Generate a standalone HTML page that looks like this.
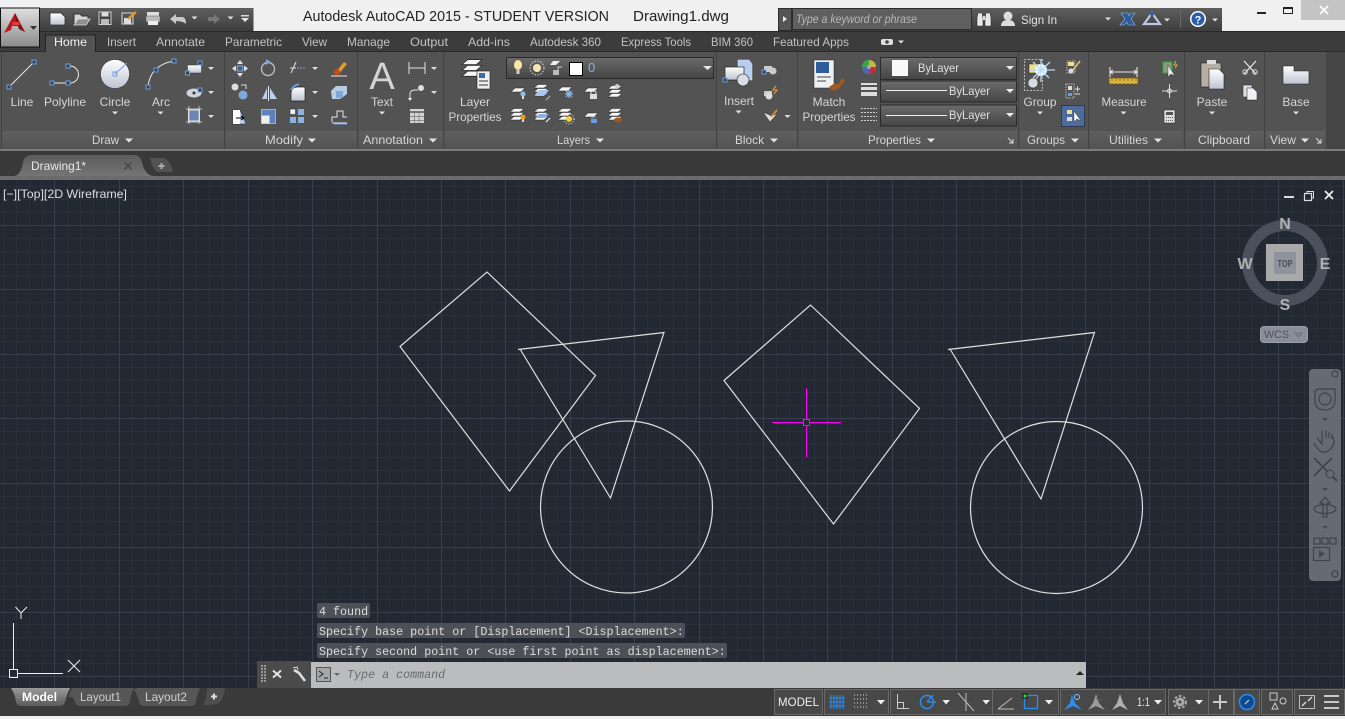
<!DOCTYPE html>
<html><head><meta charset="utf-8"><title>AutoCAD</title>
<style>
html,body{margin:0;padding:0;background:#f0f0f0;width:1345px;height:719px;overflow:hidden}
svg{display:block}
text{font-family:"Liberation Sans",sans-serif;font-size:12px;fill:#d6d6d6}
.c{text-anchor:middle}
.m{font-family:"Liberation Mono",monospace;font-size:11.7px;fill:#dcdcdc}
.tab{fill:#c2c2c2}
.nv{fill:none;stroke:#3f434b;stroke-width:1.2}
</style></head><body>
<svg width="1345" height="719" viewBox="0 0 1345 719" xmlns="http://www.w3.org/2000/svg">
<defs>
<linearGradient id="qat" x1="0" y1="0" x2="0" y2="1"><stop offset="0" stop-color="#5e5e5e"/><stop offset="1" stop-color="#3d3d3d"/></linearGradient>
<linearGradient id="app" x1="0" y1="0" x2="0" y2="1"><stop offset="0" stop-color="#e0e0e0"/><stop offset="1" stop-color="#8a8a8a"/></linearGradient>
<linearGradient id="dd" x1="0" y1="0" x2="0" y2="1"><stop offset="0" stop-color="#6b6b6b"/><stop offset="1" stop-color="#454545"/></linearGradient>
<linearGradient id="ft" x1="0" y1="0" x2="0" y2="1"><stop offset="0" stop-color="#5f5f5f"/><stop offset="1" stop-color="#535353"/></linearGradient>
<linearGradient id="wht" x1="0" y1="0" x2="0" y2="1"><stop offset="0" stop-color="#ffffff"/><stop offset="1" stop-color="#bfc3d2"/></linearGradient>
<linearGradient id="tabf" x1="0" y1="0" x2="0" y2="1"><stop offset="0" stop-color="#5c5c5c"/><stop offset="1" stop-color="#757575"/></linearGradient>
<linearGradient id="mod" x1="0" y1="0" x2="0" y2="1"><stop offset="0" stop-color="#9a9a9a"/><stop offset="1" stop-color="#5a5a5a"/></linearGradient>
<g id="t"><polygon points="-4,-2 4,-2 0,2" fill="#e4e4e4"/></g>
<g id="ts"><polygon points="-3,-1.500 3,-1.500 0,1.500" fill="#e0e0e0"/></g>
<g id="s"><rect x="-2" y="-2" width="4" height="4" fill="#3a3f48" stroke="#6a9fe8" stroke-width="1"/></g>
<g id="ly"><path d="M-7 2 L-3 -2 H7 L3 2 Z" fill="#f2f2f2" stroke="#222" stroke-width=".5"/></g>
<g id="st"><path d="M-7 -3 L-3 -6.500 H7 L3 -3 Z" fill="#f6f6f6" stroke="#222" stroke-width=".5"/><path d="M-7 1 L-3 -2.500 H7 L3 1 Z" fill="#f6f6f6" stroke="#222" stroke-width=".5"/><path d="M-7 5 L-3 1.500 H7 L3 5 Z" fill="#f6f6f6" stroke="#222" stroke-width=".5"/></g>
</defs>

<!-- title bar -->
<rect width="1345" height="719" fill="#f0f0f0"/>
<text x="303" y="21" textLength="306" lengthAdjust="spacingAndGlyphs" style="font-size:14.500px;fill:#222">Autodesk AutoCAD 2015 - STUDENT VERSION</text>
<text x="633" y="21" textLength="96" lengthAdjust="spacingAndGlyphs" style="font-size:14.500px;fill:#222">Drawing1.dwg</text>
<rect x="1301" y="0" width="44" height="20" fill="#c4c4c4"/>
<path d="M1320 6l8 8m0-8l-8 8" stroke="#fff" stroke-width="1.600" fill="none"/>
<rect x="1257" y="12" width="9" height="2" fill="#222"/>
<rect x="1283.500" y="7.500" width="9" height="6" fill="none" stroke="#222" stroke-width="1"/><rect x="1283" y="7" width="10" height="2" fill="#222"/>

<!-- QAT -->
<rect x="40" y="8" width="213.500" height="23.500" fill="url(#qat)"/>
<rect x="778" y="8" width="444" height="23.500" fill="url(#qat)"/>
<!-- tabs band -->
<rect x="0" y="31" width="1345" height="21" fill="#3c3c3c"/>
<rect x="0" y="31" width="1345" height="1" fill="#2a2a2a"/>
<rect x="0" y="52" width="1345" height="99" fill="#535353"/>
<rect x="1326" y="52" width="19" height="99" fill="#454545"/>
<rect x="0" y="51" width="1345" height="1" fill="#2a2a2a"/>
<rect x="45.500" y="35" width="50" height="18" fill="#535353"/><path d="M45.500 52V35H95.500V52" fill="none" stroke="#222"/>
<rect x="46" y="51" width="49" height="2" fill="#535353"/>

<!-- app button -->
<rect x=".5" y="8" width="39" height="39" fill="url(#app)" stroke="#111"/>
<path d="M4 33L15 13L25 32L19 29L20 26H12L11 30Z" fill="#b51a1e"/><path d="M15 13L20 24L25 32L19 29L15 18Z" fill="#7f1013"/><path d="M13 22H19L20 25H12Z" fill="#e63b3b"/>
<polygon points="30,26 37,26 33.500,30" fill="#333"/>

<!-- QAT icons -->
<path d="M50 13H61L65 17V25H50Z" fill="url(#wht)" stroke="#333" stroke-width=".8"/>
<path d="M74 14H80L82 16H88V25H74Z" fill="#d5d5d5" stroke="#333"/><path d="M74 25L78 19H90L86 25Z" fill="#8f8f8f" stroke="#ddd" stroke-width=".8"/>
<rect x="99" y="12" width="12" height="12.500" fill="#444" stroke="#d0d0d0"/><rect x="101.500" y="12.500" width="7" height="4" fill="#ddd"/><rect x="101" y="19" width="8" height="5" fill="#bbb"/>
<rect x="122" y="13" width="11" height="11" fill="#555" stroke="#ddd"/><rect x="124" y="18" width="7" height="6" fill="#ddd"/><path d="M128 19L136 12" stroke="#e59a2c" stroke-width="2.400"/>
<rect x="147" y="12" width="12" height="4" fill="#ddd"/><rect x="146" y="16" width="14" height="6" fill="#bbb" stroke="#555" stroke-width=".5"/><rect x="148" y="21" width="10" height="4" fill="#eee"/>
<path d="M170 19L176 14V17H182Q186 17 186 24Q183 21 176 21V24Z" fill="#c8c8c8"/>
<use href="#ts" x="194.500" y="18"/>
<path d="M220 19L214 14V17H208V21H214V24Z" fill="#777"/>
<use href="#ts" x="230.500" y="18"/>
<rect x="241" y="15" width="8" height="1.500" fill="#ddd"/><use href="#t" x="245" y="20"/>

<!-- search -->
<rect x="778.500" y="8.500" width="13" height="22" fill="#555" stroke="#2c2c2c"/>
<polygon points="783,16 783,22 787,19" fill="#e8e8e8"/>
<rect x="792.500" y="8.500" width="179" height="21" fill="#5f5f5f" stroke="#2c2c2c"/>
<text x="796" y="23" textLength="121" lengthAdjust="spacingAndGlyphs" style="font-size:11.500px;font-style:italic;fill:#b8b8b8">Type a keyword or phrase</text>
<path d="M977 26V18L978 13H982L983 18V26ZM985 26V18L986 13H990L991 18V26Z" fill="#e8e8e8" stroke="#333" stroke-width=".6"/><rect x="983" y="16" width="2" height="4" fill="#ddd"/>
<circle cx="1008" cy="16" r="4.500" fill="#ddd"/><path d="M1001 26Q1001 21 1006 20H1010Q1015 21 1015 26Z" fill="#ddd"/>
<text x="1021" y="24" textLength="36" lengthAdjust="spacingAndGlyphs" style="fill:#e2e2e2">Sign In</text>
<use href="#ts" x="1108" y="19"/>
<path d="M1121 13H1128L1129 16L1131 13H1135L1131 19L1135 25H1128L1127 22L1124 25H1120L1125 19Z" fill="#2d5c9e" stroke="#9ab8e0" stroke-width=".6"/>
<path d="M1152 13L1160 24H1144Z" fill="none" stroke="#b8c8ea" stroke-width="2.200"/><circle cx="1152" cy="14" r="2" fill="#345ea6"/>
<use href="#ts" x="1167" y="20"/>
<rect x="1180" y="10" width="1" height="18" fill="#6a6a6a"/>
<circle cx="1198" cy="19" r="8" fill="#fff"/><circle cx="1198" cy="19" r="6.500" fill="#2a5caa"/>
<text x="1198" y="23.500" class="c" style="font-weight:bold;font-size:11px;fill:#fff">?</text>
<use href="#ts" x="1215" y="20"/>

<!-- tab labels -->
<text x="54" y="46" textLength="33" lengthAdjust="spacingAndGlyphs" style="fill:#f0f0f0">Home</text>
<text class="tab" x="107" y="46" textLength="29" lengthAdjust="spacingAndGlyphs">Insert</text>
<text class="tab" x="156" y="46" textLength="49" lengthAdjust="spacingAndGlyphs">Annotate</text>
<text class="tab" x="225" y="46" textLength="57" lengthAdjust="spacingAndGlyphs">Parametric</text>
<text class="tab" x="302" y="46" textLength="25" lengthAdjust="spacingAndGlyphs">View</text>
<text class="tab" x="347" y="46" textLength="43" lengthAdjust="spacingAndGlyphs">Manage</text>
<text class="tab" x="410" y="46" textLength="38" lengthAdjust="spacingAndGlyphs">Output</text>
<text class="tab" x="468" y="46" textLength="42" lengthAdjust="spacingAndGlyphs">Add-ins</text>
<text class="tab" x="530" y="46" textLength="71" lengthAdjust="spacingAndGlyphs">Autodesk 360</text>
<text class="tab" x="621" y="46" textLength="70" lengthAdjust="spacingAndGlyphs">Express Tools</text>
<text class="tab" x="711" y="46" textLength="42" lengthAdjust="spacingAndGlyphs">BIM 360</text>
<text class="tab" x="773" y="46" textLength="76" lengthAdjust="spacingAndGlyphs">Featured Apps</text>
<rect x="881" y="39" width="12" height="6" rx="2" fill="#ddd"/><circle cx="887" cy="42" r="1.800" fill="#444"/>
<use href="#ts" x="901" y="42"/>

<!-- panel footers and dividers -->
<rect x="2" y="131" width="222" height="17" fill="url(#ft)"/><rect x="226" y="131" width="131" height="17" fill="url(#ft)"/><rect x="359" y="131" width="84" height="17" fill="url(#ft)"/><rect x="445" y="131" width="271" height="17" fill="url(#ft)"/><rect x="718" y="131" width="79" height="17" fill="url(#ft)"/><rect x="799" y="131" width="219" height="17" fill="url(#ft)"/><rect x="1020" y="131" width="68" height="17" fill="url(#ft)"/><rect x="1090" y="131" width="93" height="17" fill="url(#ft)"/><rect x="1186" y="131" width="78" height="17" fill="url(#ft)"/><rect x="1266" y="131" width="59" height="17" fill="url(#ft)"/>
<path d="M224.500 52V149M357.500 52V149M443.500 52V149M716.500 52V149M797.500 52V149M1018.500 52V149M1088.500 52V149M1184.500 52V149M1264.500 52V149M1.500 52V149" stroke="#424242" fill="none"/>
<rect x="0" y="149" width="1345" height="2" fill="#7b7b7b"/>

<!-- panel titles -->
<text x="92" y="144" textLength="27" lengthAdjust="spacingAndGlyphs">Draw</text><use href="#t" x="129" y="140.500"/>
<text x="265" y="144" textLength="38" lengthAdjust="spacingAndGlyphs">Modify</text><use href="#t" x="312" y="140.500"/>
<text x="363" y="144" textLength="60" lengthAdjust="spacingAndGlyphs">Annotation</text><use href="#t" x="433" y="140.500"/>
<text x="557" y="144" textLength="33" lengthAdjust="spacingAndGlyphs">Layers</text><use href="#t" x="600" y="140.500"/>
<text x="735" y="144" textLength="29" lengthAdjust="spacingAndGlyphs">Block</text><use href="#t" x="774" y="140.500"/>
<text x="868" y="144" textLength="53" lengthAdjust="spacingAndGlyphs">Properties</text><use href="#t" x="931" y="140.500"/>
<text x="1027" y="144" textLength="38" lengthAdjust="spacingAndGlyphs">Groups</text><use href="#t" x="1075" y="140.500"/>
<text x="1109" y="144" textLength="39" lengthAdjust="spacingAndGlyphs">Utilities</text><use href="#t" x="1158" y="140.500"/>
<text x="1198" y="144" textLength="52" lengthAdjust="spacingAndGlyphs">Clipboard</text>
<text x="1270" y="144" textLength="26" lengthAdjust="spacingAndGlyphs">View</text><use href="#t" x="1305" y="140.500"/>
<path d="M1008 138l5 5m0-4v4h-4" stroke="#ddd" fill="none"/><path d="M1316 138l5 5m0-4v4h-4" stroke="#ddd" fill="none"/>

<!-- Draw -->
<path d="M9 87L34 62" stroke="#e8e8e8" stroke-width="1"/><use href="#s" x="9" y="87"/><use href="#s" x="34" y="62"/>
<path d="M52 83H70A8.500 8.500 0 0 0 70 66H68" stroke="#e8e8e8" fill="none"/><use href="#s" x="52" y="83"/><use href="#s" x="68" y="83"/><use href="#s" x="68" y="66"/>
<circle cx="115" cy="74" r="14.500" fill="url(#wht)" stroke="#333" stroke-width=".5"/><path d="M115 74L127 63" stroke="#6a9fe8"/><rect x="113" y="72" width="4" height="4" fill="none" stroke="#6a9fe8"/>
<path d="M148 87Q150 65 174 61" stroke="#e8e8e8" fill="none"/><use href="#s" x="148" y="87"/><use href="#s" x="156" y="70"/><use href="#s" x="174" y="61"/>
<text class="c" x="22" y="106">Line</text><text class="c" x="65" y="106" textLength="42" lengthAdjust="spacingAndGlyphs">Polyline</text><text class="c" x="115" y="106">Circle</text><text class="c" x="161" y="106">Arc</text>
<use href="#ts" x="115" y="113"/><use href="#ts" x="160.500" y="113"/>
<rect x="187.500" y="65" width="14" height="8" fill="url(#wht)" stroke="#333" stroke-width=".5"/><use href="#s" x="187.500" y="73"/><use href="#s" x="200" y="63"/>
<ellipse cx="194" cy="93" rx="7.500" ry="4.500" fill="#cfd3de"/><circle cx="194" cy="93" r="1.500" fill="#333"/><use href="#s" x="200" y="90"/>
<rect x="188.500" y="110" width="11" height="11" fill="#6c86b4" stroke="#ddd"/><path d="M186 109H202M186 122H202M189 106V124M199 106V124" stroke="#e8e8e8" stroke-width=".7"/>
<use href="#ts" x="211" y="68.500"/><use href="#ts" x="211" y="92.500"/><use href="#ts" x="211" y="116.500"/>

<!-- Modify -->
<path d="M240 60L243 64H237ZM240 77L243 73H237ZM232 68.500L236 65.500V71.500ZM248 68.500L244 65.500V71.500Z" fill="#e4e4e4"/><rect x="237.500" y="66" width="5" height="5" fill="none" stroke="#6a9fe8" stroke-width="1.200"/>
<circle cx="268" cy="69" r="6.500" fill="none" stroke="#bcbcbc" stroke-width="1.400"/><path d="M266 59L271 62L266 65Z" fill="#7da8de"/>
<path d="M291 73L296 62" stroke="#e0e0e0"/><path d="M290 68H296" stroke="#e0e0e0"/><path d="M297 68H306" stroke="#6a9fe8" stroke-dasharray="2 1"/>
<path d="M335 73L344 62 347 64 338 75Z" fill="#e49a32"/><circle cx="337" cy="72" r="3" fill="#cc4a14"/><path d="M331 76H347" stroke="#e8e8e8"/>
<use href="#ts" x="315" y="68.500"/><use href="#ts" x="315" y="92.500"/><use href="#ts" x="315" y="116.500"/>
<circle cx="235" cy="87" r="3.500" fill="#ddd"/><circle cx="243" cy="95" r="4.500" fill="#7da8de"/><path d="M241 85H246V89" stroke="#ddd" fill="none"/>
<path d="M267 88L262 99H267ZM270 88L277 99H270Z" fill="#b9d0ee"/><path d="M268.500 86V101" stroke="#eee"/>
<path d="M291 101V94Q291 87 298 87H305V101Z" fill="url(#wht)" stroke="#222" stroke-width=".7"/><path d="M291 90Q293 86 299 84" stroke="#6a9fe8" stroke-width="1.800" fill="none"/>
<path d="M331 91L336 86H347V94L340 99H332Z" fill="#b9cce4"/><rect x="336" y="91" width="7" height="7" fill="#7da8de"/>
<path d="M233 110H240L246 124H233Z" fill="#b8cfee" stroke="#222" stroke-width=".5"/><path d="M233 110H240V124H233Z" fill="#fff"/><path d="M236 118H244M241 116L244 118L241 120" stroke="#000" fill="none"/>
<rect x="261.500" y="109.500" width="14" height="14" fill="#5d82bb" stroke="#aac"/><rect x="261.500" y="115.500" width="8" height="8" fill="#eee"/>
<rect x="290" y="109" width="5.500" height="5.500" fill="#eee" stroke="#222" stroke-width=".5"/><rect x="298" y="109" width="6" height="6" fill="#8fb1e0"/><rect x="290" y="117" width="6" height="6" fill="#8fb1e0"/><rect x="298" y="117" width="6" height="6" fill="#8fb1e0"/>
<path d="M332 122V117H337V111H343V117H347M332 123H347" stroke="#dfe6f2" fill="none"/><path d="M334 124H347" stroke="#6a9fe8"/>

<!-- Annotation -->
<text x="382" y="89" class="c" style="font-size:38px;fill:#d4d4d4">A</text>
<text class="c" x="382" y="106">Text</text><use href="#ts" x="382" y="113"/>
<path d="M409 62V74M425 62V74M409 68H425" stroke="#e2e2e2" fill="none"/>
<path d="M410 100V94Q410 90 415 90H418" stroke="#e2e2e2" fill="none"/><circle cx="421" cy="88" r="3" fill="#ddd"/><path d="M408 98L410 101L412 98Z" fill="#eee"/>
<rect x="410" y="109" width="14" height="14" fill="#d4d4d4"/><path d="M410 112H424" stroke="#777" stroke-width="2"/><path d="M410 116.500H424M410 120.500H424M414.500 112V123M419 112V123" stroke="#777" stroke-width=".7"/>
<use href="#ts" x="434" y="68.500"/><use href="#ts" x="434" y="92.500"/>

<!-- Layers -->
<use href="#st" transform="translate(472,69) scale(1.450)"/><rect x="477" y="71" width="13" height="18" fill="#eee" stroke="#222" stroke-width=".6"/><rect x="479" y="73" width="6" height="5" fill="#3c6cae"/><path d="M479 81H488M479 85H488" stroke="#333"/>
<text class="c" x="475" y="106">Layer</text><text class="c" x="475" y="121" textLength="53" lengthAdjust="spacingAndGlyphs">Properties</text>
<rect x="506.500" y="57.500" width="207" height="21" fill="url(#dd)" stroke="#2a2a2a"/>
<ellipse cx="518" cy="65" rx="4" ry="5" fill="#f6e6a2"/><rect x="516.500" y="70" width="3" height="4" fill="#ccc"/>
<circle cx="537" cy="68" r="4" fill="#f6e6b0"/><circle cx="537" cy="68" r="7" fill="none" stroke="#ddd" stroke-dasharray="1.500 1.500"/>
<path d="M550 65L553 61H560L556 65Z" fill="#eee"/><rect x="553" y="70" width="6" height="5" fill="#bbb"/><path d="M558 70V67H562" stroke="#ccc" fill="none"/>
<rect x="569.500" y="62.500" width="13" height="13" fill="#fff" stroke="#000"/>
<text x="588" y="72" style="font-size:13px;fill:#86b2ea">0</text>
<polygon points="703,66 712,66 707.500,70" fill="#e8e8e8"/>
<use href="#ly" x="518" y="90"/><circle cx="523" cy="94" r="2.500" fill="#8ec0f0"/><rect x="522" y="96" width="2" height="3" fill="#ddd"/>
<use href="#st" x="541" y="91"/><path d="M535 95L539 90H549L545 95Z" fill="#a8c6ee"/><path d="M550 96L546 100" stroke="#bbb"/>
<use href="#ly" x="565" y="89"/><path d="M569 90V98M565 94H573M566 91L572 97M572 91L566 97" stroke="#8ebcf0" stroke-width="1.200"/>
<use href="#ly" x="591" y="90"/><rect x="590" y="94" width="7" height="5" fill="#ddd"/><path d="M591 94V92Q593.500 90 596 92V94" stroke="#ddd" fill="none"/>
<use href="#st" x="615" y="92"/><circle cx="617" cy="86" r="2" fill="#ccc"/>
<use href="#st" x="517" y="115"/><circle cx="523" cy="117" r="2.500" fill="#f09a22"/><rect x="522" y="119" width="2" height="3" fill="#ddd"/>
<use href="#st" x="541" y="115"/><path d="M535 118L539 114H549L545 118Z" fill="#8ab0e6"/><path d="M546 122L550 118" stroke="#fff"/>
<use href="#st" x="565" y="115"/><circle cx="569" cy="119" r="3" fill="#f6d03a"/><circle cx="569" cy="119" r="5" fill="none" stroke="#eee" stroke-dasharray="1 1.500"/>
<use href="#ly" x="591" y="115"/><rect x="591" y="119" width="6" height="4" fill="#6a9fe8"/><path d="M592 119V117H596" stroke="#6a9fe8" fill="none"/>
<use href="#st" x="615" y="115"/><ellipse cx="618" cy="120" rx="4" ry="2.500" fill="#9a5a1e"/>

<!-- Block -->
<path d="M738 60H749L752 64V80H738Z" fill="#b5cdee" stroke="#dde" stroke-width=".5"/><rect x="725" y="67" width="19" height="13" fill="url(#wht)" stroke="#222" stroke-width=".7"/><circle cx="743" cy="80" r="6" fill="#d9dce4" stroke="#222" stroke-width=".6"/><use href="#s" x="725" y="80"/>
<text class="c" x="739" y="105">Insert</text><use href="#ts" x="738.500" y="112"/>
<rect x="764" y="66" width="8" height="6" fill="#ccc"/><circle cx="773" cy="71" r="3.500" fill="#ccc"/><use href="#s" x="764" y="72"/>
<rect x="764" y="91" width="8" height="5" fill="#ccc"/><circle cx="769" cy="96" r="3.500" fill="#ddd"/><path d="M776 86L773 90H777L774 94" stroke="#f0a83a" fill="none"/>
<path d="M763 112L770 122L778 113L772 116Z" fill="#ddd" stroke="#222" stroke-width=".5"/><path d="M771 117L777 110" stroke="#e49a32" stroke-width="1.500"/>
<use href="#ts" x="787.500" y="116.500"/>

<!-- Properties -->
<rect x="814" y="60" width="20" height="28" fill="#eef0f4" stroke="#222" stroke-width=".5"/><rect x="816" y="62" width="13" height="11" fill="#2f5d9c"/><path d="M817 77H831M817 81H826" stroke="#444"/>
<path d="M829 87L835 83 838 85 842 78 845 80 841 86 838 89 832 91Z" fill="#9e5c20"/>
<text class="c" x="829" y="106">Match</text><text class="c" x="829" y="121" textLength="53" lengthAdjust="spacingAndGlyphs">Properties</text>
<circle cx="869" cy="67" r="7" fill="#c9b838"/><path d="M869 67L862 67A7 7 0 0 1 869 60Z" fill="#3ca24a"/><path d="M869 67L869 74A7 7 0 0 1 862 67Z" fill="#4a64c4"/><path d="M869 67L876 67A7 7 0 0 1 869 74Z" fill="#c42c3c"/><circle cx="869" cy="67" r="2" fill="#aaa"/>
<rect x="861" y="83" width="16" height="2" fill="#ddd"/><rect x="861" y="87" width="16" height="3" fill="#ddd"/><rect x="861" y="92" width="16" height="4" fill="#ddd"/>
<path d="M861 108.500H877M861 112.500H877M861 116.500H877M861 120.500H877" stroke="#ccc" stroke-dasharray="2 1"/>
<rect x="880.500" y="57.500" width="136" height="22" fill="url(#dd)" stroke="#2a2a2a"/>
<rect x="880.500" y="81" width="136" height="21" fill="url(#dd)" stroke="#2a2a2a"/>
<rect x="880.500" y="105" width="136" height="21" fill="url(#dd)" stroke="#2a2a2a"/>
<rect x="892" y="60" width="16" height="16" fill="#f8f8f8"/>
<text x="918" y="72" textLength="41" lengthAdjust="spacingAndGlyphs" style="fill:#e0e0e0">ByLayer</text>
<rect x="886" y="90" width="61" height="1" fill="#eee"/><rect x="886" y="115" width="61" height="1" fill="#eee"/>
<text x="949" y="95" textLength="41" lengthAdjust="spacingAndGlyphs" style="fill:#e0e0e0">ByLayer</text>
<text x="949" y="119" textLength="41" lengthAdjust="spacingAndGlyphs" style="fill:#e0e0e0">ByLayer</text>
<polygon points="1006,66 1014,66 1010,70" fill="#eee"/><polygon points="1006,89 1014,89 1010,93" fill="#eee"/><polygon points="1006,113 1014,113 1010,117" fill="#eee"/>

<!-- Groups -->
<rect x="1024.500" y="59.500" width="18" height="31" fill="none" stroke="#bbb" stroke-dasharray="2 1.500"/>
<rect x="1029" y="64" width="11" height="9" fill="#ece08a" stroke="#222" stroke-width=".5"/><circle cx="1033" cy="83" r="5" fill="#d8dbe4" stroke="#222" stroke-width=".5"/><path d="M1036 79L1042 71" stroke="#eee"/>
<circle cx="1041" cy="70" r="6" fill="#f2faff"/><path d="M1041 59V82M1030 70H1055M1033 62L1049 78M1050 62L1033 78" stroke="#b4dcfa" stroke-width="1.300"/>
<text class="c" x="1040" y="106" textLength="33" lengthAdjust="spacingAndGlyphs">Group</text><use href="#ts" x="1040" y="113"/>
<rect x="1067" y="61" width="8" height="12" fill="none" stroke="#bbb" stroke-dasharray="1.500 1"/><rect x="1068" y="62" width="6" height="4" fill="#ece08a"/><circle cx="1071" cy="71" r="2.500" fill="#ddd"/><path d="M1073 70L1080 61" stroke="#e8c86a" stroke-width="1.500"/>
<rect x="1066" y="84" width="8" height="14" fill="none" stroke="#bbb" stroke-dasharray="1.500 1"/><rect x="1068" y="86" width="4" height="4" fill="#ddd"/><rect x="1068" y="93" width="4" height="3" fill="#6a9fe8"/><path d="M1075 89H1080M1077.500 86.500V91.500M1075 94H1080" stroke="#ddd"/>
<rect x="1061.500" y="105.500" width="23" height="21" fill="#4d6b9b" stroke="#2d3a50"/><rect x="1067" y="110" width="5" height="4" fill="#ece08a"/><rect x="1067" y="117" width="5" height="4" fill="#ddd"/><path d="M1074 111V122L1077 119L1081 121Z" fill="#fff" stroke="#222" stroke-width=".4"/>

<!-- Utilities -->
<path d="M1110 67V77M1137 67V77M1110 72H1137" stroke="#eee"/><path d="M1113 70L1110 72L1113 74M1134 70L1137 72L1134 74" stroke="#eee" fill="none"/><rect x="1109" y="78" width="29" height="6" fill="#d9b33c" stroke="#6c5310" stroke-width=".6"/><path d="M1112 78V81M1116 78V81M1120 78V81M1124 78V81M1128 78V81M1132 78V81M1136 78V81" stroke="#7c6318" stroke-width=".7"/>
<text class="c" x="1124" y="106" textLength="45" lengthAdjust="spacingAndGlyphs">Measure</text><use href="#ts" x="1123.500" y="113"/>
<rect x="1163" y="62" width="9" height="11" fill="#8a9a80" stroke="#2ea82e"/><path d="M1168 65V77L1171 74L1175 76Z" fill="#eee" stroke="#222" stroke-width=".4"/><path d="M1176 61L1174 65H1177L1175 68" stroke="#f0a83a" fill="none"/>
<path d="M1162 91H1177M1169.500 84V98" stroke="#ddd"/><circle cx="1169.500" cy="91" r="2" fill="none" stroke="#ddd"/>
<rect x="1164" y="110" width="11" height="13" fill="#ddd" stroke="#222" stroke-width=".5"/><rect x="1166" y="112" width="7" height="3" fill="#555"/><path d="M1166 117.500H1173M1166 120.500H1173" stroke="#555" stroke-dasharray="1 1"/>

<!-- Clipboard -->
<rect x="1201" y="63" width="20" height="24" fill="#b7aea4" stroke="#222" stroke-width=".6"/><rect x="1207" y="60" width="9" height="4" fill="#ddd"/><path d="M1209 69H1219L1224 74V89H1209Z" fill="url(#wht)" stroke="#222" stroke-width=".6"/>
<text class="c" x="1212" y="106">Paste</text><use href="#ts" x="1212" y="113"/>
<path d="M1244 61L1256 74M1256 61L1244 74" stroke="#e8e8e8" stroke-width="1.200"/><circle cx="1245" cy="72" r="2.200" fill="none" stroke="#ddd"/><circle cx="1255" cy="72" r="2.200" fill="none" stroke="#ddd"/>
<rect x="1243" y="85" width="9" height="12" fill="#ddd" stroke="#222" stroke-width=".5"/><path d="M1247 88H1253L1257 92V100H1247Z" fill="#eef0f4" stroke="#222" stroke-width=".5"/>

<!-- View -->
<path d="M1283 66H1294V71H1309V84H1283Z" fill="url(#wht)" stroke="#222" stroke-width=".6"/>
<text class="c" x="1296" y="106">Base</text><use href="#ts" x="1296" y="113"/>

<!-- file tab strip -->
<rect x="0" y="151" width="1345" height="25" fill="#393939"/>
<rect x="0" y="176" width="1345" height="4" fill="#6b6b6b"/>
<path d="M15 176Q21 174 23 162Q25 155 32 155H134Q140 155 142 162Q144 173 152 176Z" fill="url(#tabf)"/>
<text x="31" y="170" textLength="55" lengthAdjust="spacingAndGlyphs" style="fill:#e8e8e8">Drawing1*</text>
<path d="M124.500 162.500l7 7m0-7l-7 7" stroke="#4a4a4a" stroke-width="1.800"/>
<path d="M150 158H163Q170 159 173 172H157Q152 168 150 158Z" fill="#525252"/>
<path d="M158.500 166H164.500M161.500 163V169" stroke="#aaa" stroke-width="2"/>

<!-- canvas -->
<rect x="0" y="180" width="1345" height="508" fill="#232933"/>
<g shape-rendering="crispEdges" fill="none">
<path stroke="#2a303b" d="M3.500 180V688M16.500 180V688M29.500 180V688M42.500 180V688M67.500 180V688M80.500 180V688M93.500 180V688M106.500 180V688M132.500 180V688M145.500 180V688M158.500 180V688M170.500 180V688M196.500 180V688M209.500 180V688M222.500 180V688M235.500 180V688M261.500 180V688M273.500 180V688M286.500 180V688M299.500 180V688M325.500 180V688M338.500 180V688M351.500 180V688M364.500 180V688M389.500 180V688M402.500 180V688M415.500 180V688M428.500 180V688M454.500 180V688M467.500 180V688M480.500 180V688M492.500 180V688M518.500 180V688M531.500 180V688M544.500 180V688M557.500 180V688M583.500 180V688M595.500 180V688M608.500 180V688M621.500 180V688M647.500 180V688M660.500 180V688M673.500 180V688M686.500 180V688M711.500 180V688M724.500 180V688M737.500 180V688M750.500 180V688M776.500 180V688M789.500 180V688M802.500 180V688M814.500 180V688M840.500 180V688M853.500 180V688M866.500 180V688M879.500 180V688M905.500 180V688M917.500 180V688M930.500 180V688M943.500 180V688M969.500 180V688M982.500 180V688M995.500 180V688M1008.500 180V688M1033.500 180V688M1046.500 180V688M1059.500 180V688M1072.500 180V688M1098.500 180V688M1111.500 180V688M1124.500 180V688M1136.500 180V688M1162.500 180V688M1175.500 180V688M1188.500 180V688M1201.500 180V688M1227.500 180V688M1239.500 180V688M1252.500 180V688M1265.500 180V688M1291.500 180V688M1304.500 180V688M1317.500 180V688M1330.500 180V688"/>
<path stroke="#2a303b" d="M0 186.500H1345M0 199.500H1345M0 212.500H1345M0 238.500H1345M0 251.500H1345M0 264.500H1345M0 276.500H1345M0 302.500H1345M0 315.500H1345M0 328.500H1345M0 341.500H1345M0 367.500H1345M0 380.500H1345M0 392.500H1345M0 405.500H1345M0 431.500H1345M0 444.500H1345M0 457.500H1345M0 470.500H1345M0 496.500H1345M0 508.500H1345M0 521.500H1345M0 534.500H1345M0 560.500H1345M0 573.500H1345M0 586.500H1345M0 599.500H1345M0 624.500H1345M0 637.500H1345M0 650.500H1345M0 663.500H1345"/>
<path stroke="#383e4d" d="M54.500 180V688M119.500 180V688M183.500 180V688M248.500 180V688M312.500 180V688M377.500 180V688M441.500 180V688M505.500 180V688M570.500 180V688M634.500 180V688M699.500 180V688M763.500 180V688M827.500 180V688M892.500 180V688M956.500 180V688M1021.500 180V688M1085.500 180V688M1149.500 180V688M1214.500 180V688M1278.500 180V688M1343.500 180V688"/>
<path stroke="#383e4d" d="M0 225.500H1345M0 289.500H1345M0 354.500H1345M0 418.500H1345M0 483.500H1345M0 547.500H1345M0 612.500H1345M0 676.500H1345"/>
</g>

<!-- drawing -->
<g fill="none" stroke="#dfdfdf" stroke-width="1.200">
<path d="M487 272L595.500 375.500L509.500 491L400 346.500Z"/>
<path d="M518 349.500L664 332.500L610.500 498L520 349"/>
<circle cx="626.500" cy="507" r="86"/>
<path d="M810.500 305L919.500 408.500L833.500 524L724 380.500Z"/>
<path d="M948 349.500L1094.500 332.500L1041 499L950 349"/>
<circle cx="1056.500" cy="507.500" r="86"/>
</g>
<g shape-rendering="crispEdges" fill="none" stroke="#ff00ff">
<path d="M772 422.500H804M810 422.500H841M806.500 388V419.500M806.500 425.500V457"/>
<rect x="803.500" y="419.500" width="6" height="6"/>
</g>

<!-- viewport label -->
<text x="3" y="198" textLength="124" lengthAdjust="spacingAndGlyphs" style="fill:#dcdcdc">[−][Top][2D Wireframe]</text>
<rect x="1284" y="196" width="10" height="2" fill="#ddd"/>
<rect x="1304.500" y="193.500" width="7" height="7" fill="none" stroke="#ddd" stroke-width="1.200"/><path d="M1307 193V191.500H1313.500V198H1312" stroke="#ddd" fill="none"/>
<path d="M1325 191l8 8m0-8l-8 8" stroke="#eee" stroke-width="1.800"/>

<!-- viewcube -->
<circle cx="1285" cy="263" r="37.500" fill="none" stroke="#4a505c" stroke-width="11"/>
<rect x="1266" y="244" width="37" height="37" fill="#a9a9a9"/>
<rect x="1274" y="252" width="22" height="22" fill="#8d949c"/>
<text x="1285" y="267" class="c" style="font-size:10px;font-weight:bold;fill:#4a4f56" textLength="15" lengthAdjust="spacingAndGlyphs">TOP</text>
<text x="1285" y="229" class="c" style="font-size:16px;font-weight:bold;fill:#b0b0b0">N</text>
<text x="1325" y="269" class="c" style="font-size:16px;font-weight:bold;fill:#b0b0b0">E</text>
<text x="1285" y="310" class="c" style="font-size:16px;font-weight:bold;fill:#b0b0b0">S</text>
<text x="1245" y="269" class="c" style="font-size:16px;font-weight:bold;fill:#b0b0b0">W</text>
<rect x="1260.500" y="326.500" width="47" height="16" rx="3.500" fill="#8a8e9a" stroke="#9a9eaa"/>
<text x="1264" y="338" textLength="25" lengthAdjust="spacingAndGlyphs" style="font-size:11px;fill:#50545c">WCS</text>
<path d="M1295 333H1302L1298.500 337Z" fill="none" stroke="#6a6e78"/>

<!-- navbar -->
<rect x="1309" y="369" width="32" height="212" rx="4" fill="#666a72"/>
<circle cx="1335" cy="374" r="3" class="nv"/>
<path class="nv" d="M1315 392Q1315 389 1320 389H1335V399Q1335 410 1325 410Q1315 410 1315 400Z"/>
<circle cx="1325" cy="399" r="6" class="nv"/>
<path d="M1322 418H1328L1325 421Z" fill="#444850"/>
<path class="nv" d="M1317 438L1322 444V433M1322 438V431M1326 438V430M1329 438V432M1332 439V435Q1336 442 1332 447Q1328 453 1322 452Q1318 451 1314 443"/>
<path d="M1314 458L1332 476M1332 458L1314 476" fill="none" stroke="#3f434b" stroke-width="1.600"/><circle cx="1330" cy="474" r="4" fill="#666a72" stroke="#3f434b"/><path d="M1333 477L1337 481" stroke="#3f434b" stroke-width="2"/>
<path d="M1322 488H1328L1325 491Z" fill="#444850"/>
<path class="nv" d="M1325 497L1330 503H1327V517H1323V503H1320Z"/><ellipse cx="1325" cy="509" rx="11" ry="4.500" class="nv"/>
<path d="M1322 526H1328L1325 529Z" fill="#444850"/>
<rect x="1314" y="538" width="6" height="6" class="nv"/><rect x="1322" y="538" width="6" height="6" class="nv"/><rect x="1330" y="538" width="6" height="6" class="nv"/>
<rect x="1313.500" y="547.500" width="16" height="13" class="nv"/><path d="M1319 550V558L1325 554Z" fill="#444850"/>
<circle cx="1335" cy="574" r="3" class="nv"/>

<!-- UCS -->
<g fill="none" stroke="#eee" stroke-width="1">
<path d="M15.500 607L21 613M27 607L21 613V619"/>
<path d="M13.500 623V669M18 673.500H63"/>
<rect x="9.500" y="669.500" width="8" height="8"/>
<path d="M68 660L80 672M80 660L68 672"/>
</g>

<!-- command history -->
<rect x="317" y="603" width="53" height="15" rx="2" fill="#4d5157"/>
<rect x="317" y="623" width="368" height="15" rx="2" fill="#4d5157"/>
<rect x="317" y="643" width="410" height="15" rx="2" fill="#4d5157"/>
<text class="m" x="319" y="615">4 found</text>
<text class="m" x="319" y="635">Specify base point or [Displacement] &lt;Displacement&gt;:</text>
<text class="m" x="319" y="655">Specify second point or &lt;use first point as displacement&gt;:</text>

<!-- command bar -->
<rect x="257" y="661" width="54" height="27" rx="1" fill="#4b4b4b"/>
<rect x="311" y="662" width="775" height="26" fill="#babcbe"/>
<path d="M262 665V682M265 665V682" stroke="#9a9a9a" stroke-width="2" stroke-dasharray="2 1"/>
<path d="M273 670.500l8 7m0-7l-8 7" stroke="#e4e4e4" stroke-width="2"/>
<path d="M294 670L299 673 305 681" stroke="#ddd" stroke-width="2.600" fill="none"/><path d="M293 668L297 667 298 670" stroke="#ddd" fill="none"/>
<rect x="316.500" y="667.500" width="14" height="14" fill="#a4a6a8" stroke="#555"/><path d="M319 671L323 674L319 677M324 678H328" stroke="#222" fill="none"/>
<path d="M334 673H340L337 676Z" fill="#666"/>
<text x="347" y="678" class="m" style="font-style:italic;fill:#6a6a6a">Type a command</text>
<polygon points="1076,675 1084,675 1080,671" fill="#222"/>

<!-- layout tabs / status -->
<rect x="0" y="688" width="1345" height="28" fill="#3a3a3a"/>
<rect x="0" y="716" width="1345" height="3" fill="#f0f0f0"/>
<path d="M11 688H70Q67 694 65 702Q64 706 60 706H20Q17 706 16 702Q15 694 11 688Z" fill="url(#mod)"/>
<path d="M72 688H134Q131 694 130 702Q129 706 125 706H80Q76 706 75 702Q74 696 68 697Z" fill="#565656"/>
<path d="M137 688H200Q197 694 196 702Q195 706 191 706H144Q140 706 139 702Q138 696 134 690Z" fill="#565656"/>
<path d="M207 688H225Q224 698 219 703Q215 705 203 705Q207 698 207 688Z" fill="#4e4e4e"/>
<path d="M211 696.500H217M214 693.500V699.500" stroke="#ddd" stroke-width="2"/>
<text x="22" y="701" textLength="35" lengthAdjust="spacingAndGlyphs" style="font-weight:bold;fill:#fff">Model</text>
<text x="80" y="701" textLength="41" lengthAdjust="spacingAndGlyphs" style="fill:#cfcfcf">Layout1</text>
<text x="145" y="701" textLength="42" lengthAdjust="spacingAndGlyphs" style="fill:#cfcfcf">Layout2</text>

<g fill="#484848" stroke="#6a6a6a">
<rect x="774.500" y="689.500" width="48" height="25"/>
<rect x="824.500" y="689.500" width="64" height="25"/>
<rect x="890.500" y="689.500" width="102" height="25"/>
<rect x="992.500" y="689.500" width="66" height="25"/>
<rect x="1060.500" y="689.500" width="105" height="25"/>
<rect x="1168.500" y="689.500" width="40" height="25"/>
<rect x="1208.500" y="689.500" width="25" height="25"/>
<rect x="1234.500" y="689.500" width="25" height="25"/>
<rect x="1261.500" y="689.500" width="31" height="25"/>
<rect x="1294.500" y="689.500" width="50" height="25"/>
</g>
<text x="778" y="706" textLength="41" lengthAdjust="spacingAndGlyphs" style="fill:#f0f0f0">MODEL</text>
<path d="M831 695V709M834 695V709M837 695V709M840 695V709M843 695V709M829 698H845M829 702H845M829 706H845" stroke="#2e8cf0" stroke-width="1"/>
<path d="M854 695H868M854 699H868M854 703H868M854 707H868" stroke="#ddd" stroke-dasharray="1 2"/>
<polygon points="877,700 885,700 881,704.500" fill="#eee"/>
<path d="M897.500 694V708.500H909M897.500 702.500H903.500V708" stroke="#ccc" fill="none"/>
<circle cx="927" cy="702" r="6.500" fill="none" stroke="#2a8ef0" stroke-width="1.500"/><path d="M927 702H936M927 702L933 695" stroke="#2a8ef0" stroke-width="1.300"/>
<polygon points="942.500,700 950,700 946,704.500" fill="#eee"/>
<path d="M958 693L974 711M966 693V711" stroke="#bbb" fill="none"/>
<polygon points="982.500,700 990,700 986,704.500" fill="#eee"/>
<path d="M998 709L1012 698M998 709H1014" stroke="#bbb" fill="none"/>
<rect x="1024.500" y="695.500" width="13" height="13" fill="none" stroke="#2a8ef0" stroke-width="1.300"/><rect x="1023" y="694" width="4" height="4" fill="#2fe02f" stroke="#111"/>
<polygon points="1045,700 1053,700 1049,704.500" fill="#eee"/>
<path d="M1072 694L1075 703L1082 710L1073 706L1064 710L1070 703Z" fill="#2a8ef0"/><circle cx="1077" cy="697" r="2.500" fill="none" stroke="#8cc4f8"/>
<path d="M1096 694L1099 703L1105 710L1096 706L1088 710L1093 703Z" fill="#9a9a9a"/><path d="M1099 694L1097 699H1101L1099 703" stroke="#555" fill="none"/>
<path d="M1120 694L1123 703L1128 710L1120 706L1112 710L1117 703Z" fill="#b0b0b0"/>
<text x="1137" y="706" textLength="13" lengthAdjust="spacingAndGlyphs" style="fill:#e8e8e8">1:1</text>
<polygon points="1154,700 1162,700 1158,704.500" fill="#eee"/>
<circle cx="1180" cy="702" r="4.500" fill="#aaa"/><circle cx="1180" cy="702" r="6" fill="none" stroke="#aaa" stroke-width="2" stroke-dasharray="2.500 2"/><circle cx="1180" cy="702" r="1.500" fill="#484848"/>
<polygon points="1195,700 1203,700 1199,704.500" fill="#eee"/>
<path d="M1220 695V709M1213 702H1227" stroke="#c8c8c8" stroke-width="2"/>
<circle cx="1247" cy="702" r="7.500" fill="#0f4a8e" stroke="#2a8ef0" stroke-width="1.500"/><path d="M1245 704L1249 700" stroke="#cfe4fa"/>
<rect x="1270" y="693" width="7" height="7" fill="none" stroke="#ccc"/><circle cx="1283" cy="701" r="3" fill="none" stroke="#ccc"/><path d="M1275 703L1278 709H1272Z" fill="none" stroke="#ccc"/>
<rect x="1299.500" y="695.500" width="15" height="13" fill="none" stroke="#bbb"/><path d="M1302 706L1306 702M1308 701L1312 697" stroke="#ddd" stroke-width="1.400"/>
<path d="M1324 696H1339M1324 702H1339M1324 708H1339" stroke="#c8c8c8" stroke-width="2"/>
</svg>
</body></html>
